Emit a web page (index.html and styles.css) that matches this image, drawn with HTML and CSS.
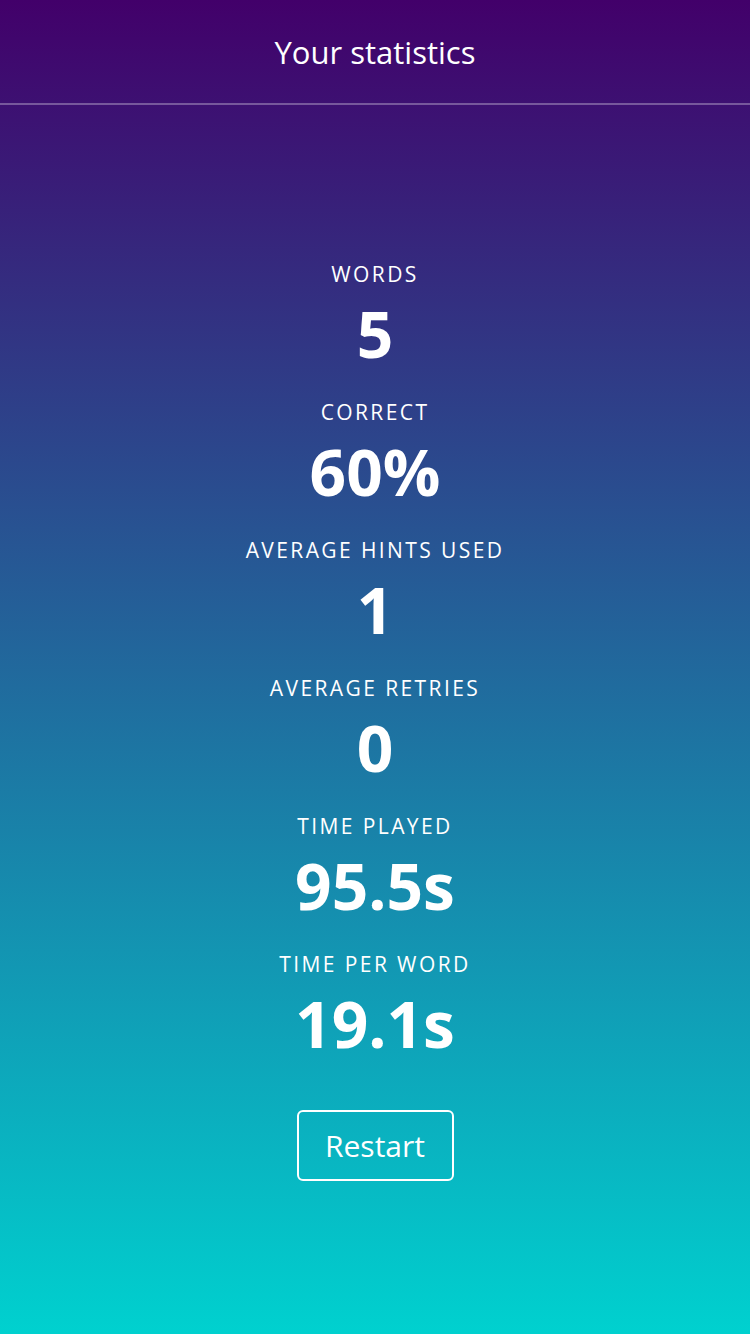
FILE: index.html
```html
<!DOCTYPE html>
<html>
<head>
<meta charset="utf-8">
<link rel="stylesheet" href="styles.css">
</head>
<body>
<div class="app">
  <header class="header">Your statistics</header>
  <main class="main">
    <div class="stat"><div class="label">Words</div><div class="value">5</div></div>
    <div class="stat"><div class="label">Correct</div><div class="value">60%</div></div>
    <div class="stat"><div class="label">Average hints used</div><div class="value">1</div></div>
    <div class="stat"><div class="label">Average retries</div><div class="value">0</div></div>
    <div class="stat"><div class="label">Time played</div><div class="value">95.5s</div></div>
    <div class="stat"><div class="label">Time per word</div><div class="value">19.1s</div></div>
    <button class="restart">Restart</button>
  </main>
</div>
</body>
</html>
```
FILE: styles.css
```css
html, body {
  margin: 0;
  padding: 0;
  height: 100%;
}
body {
  background: linear-gradient(180deg, #42006a 0%, #00d1cf 100%);
  color: #fff;
  font-family: "Open Sans", "Liberation Sans", sans-serif;
}
.app {
  min-height: 100vh;
  display: flex;
  flex-direction: column;
}
.header {
  height: 103px;
  display: flex;
  align-items: center;
  justify-content: center;
  font-size: 31px;
  border-bottom: 2px solid rgba(255,255,255,0.3);
}
.main {
  flex: 1;
  display: flex;
  flex-direction: column;
  align-items: center;
  justify-content: center;
  padding-top: 2px;
}
.stat {
  display: flex;
  flex-direction: column;
  align-items: center;
  height: 138px;
}
.label {
  font-size: 21px;
  line-height: 28px;
  letter-spacing: 2.4px;
  text-transform: uppercase;
}
.value {
  font-size: 64px;
  font-weight: 700;
  line-height: 80px;
  margin-top: 6px;
}
.restart {
  margin-top: 22px;
  width: 157px;
  height: 71px;
  background: transparent;
  border: 2px solid #fff;
  border-radius: 6px;
  color: #fff;
  font-family: inherit;
  font-size: 30px;
  padding: 0;
}
```
